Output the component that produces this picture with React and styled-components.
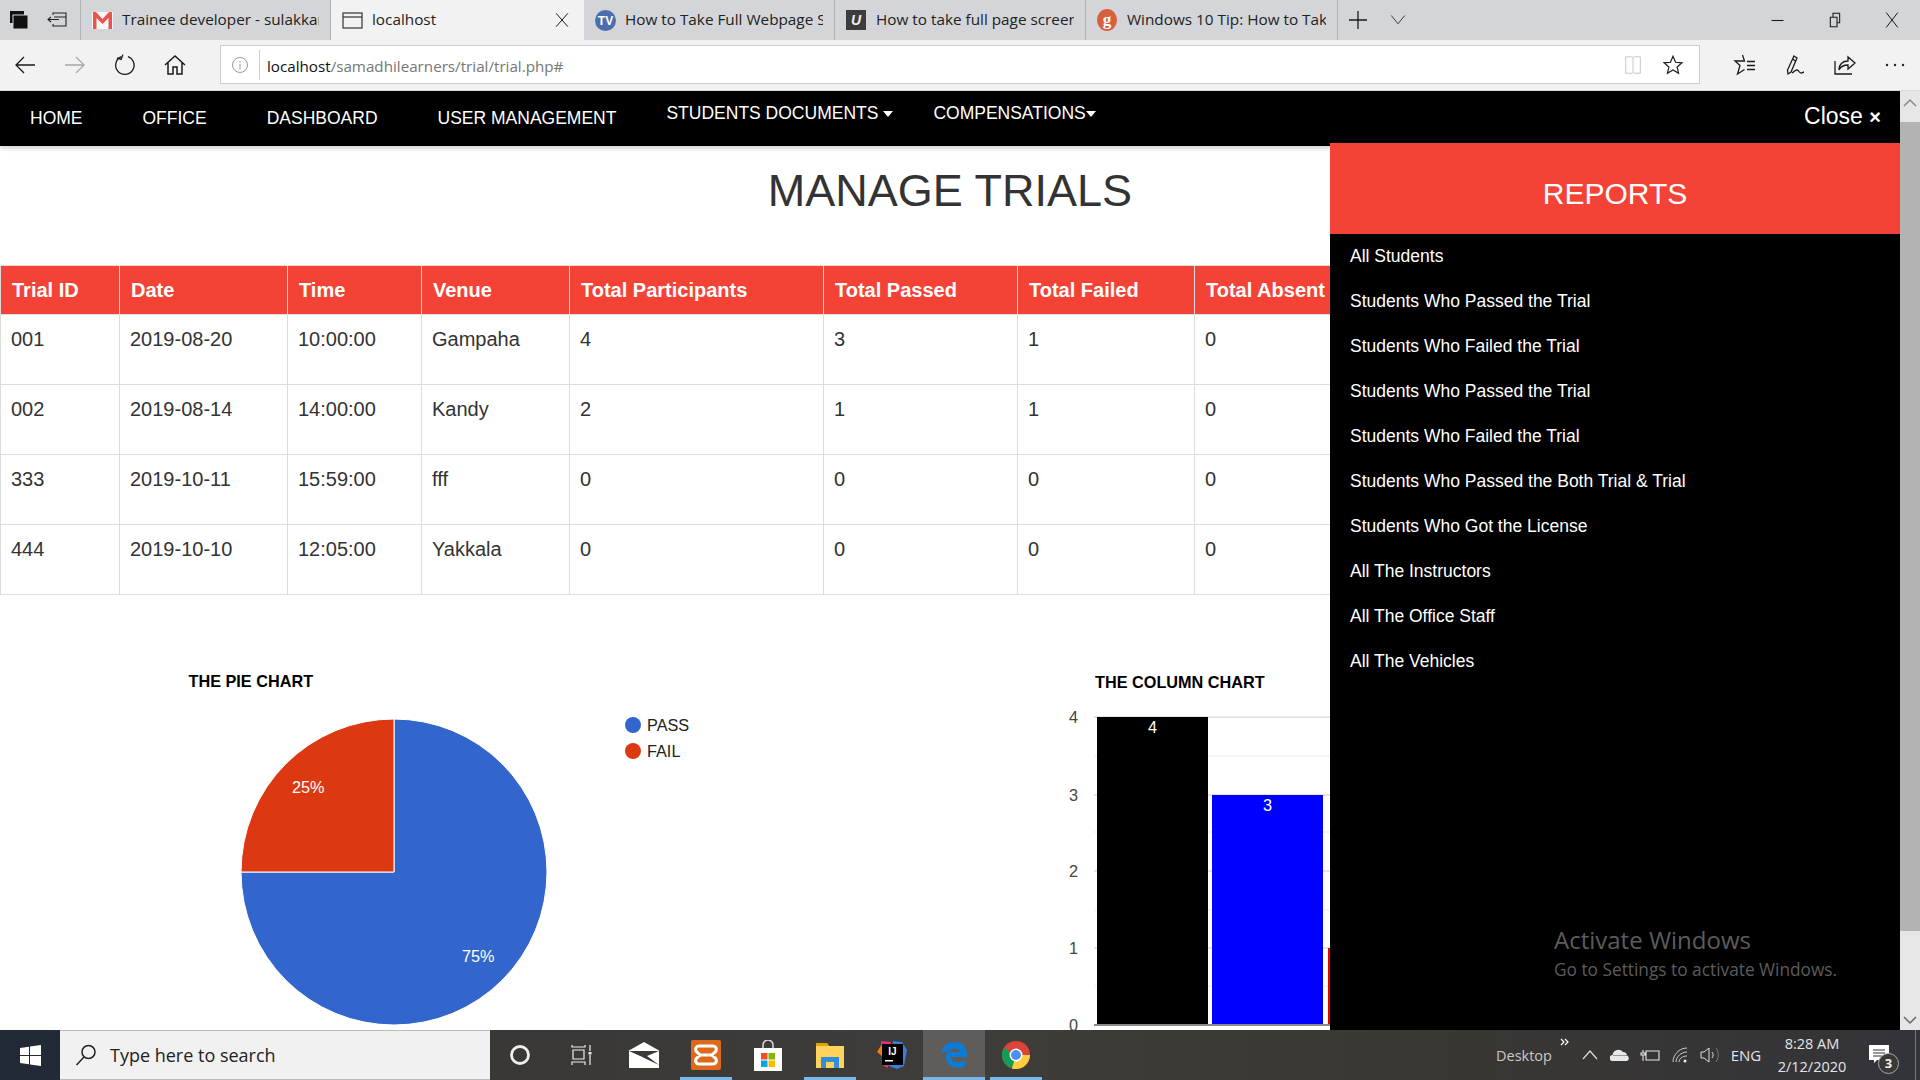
import React from 'react';
import styled, { createGlobalStyle } from 'styled-components';

const GlobalStyle = createGlobalStyle`
  html, body {
    margin: 0;
    height: 100%;
    overflow: hidden;
    background: #fff;
  }
  * {
    box-sizing: border-box;
  }
`;

const uiFont = `"Open Sans", "Noto Sans", sans-serif`;
const pageFont = `"Liberation Sans", Arial, sans-serif`;

const tabs = [
  { title: 'Trainee developer - sulakkani', width: 250, icon: 'gmail' },
  { title: 'localhost', width: 253, icon: 'page', active: true },
  { title: 'How to Take Full Webpage Screenshots', width: 251, icon: 'tv' },
  { title: 'How to take full page screenshot', width: 251, icon: 'u' },
  { title: 'Windows 10 Tip: How to Take', width: 252, icon: 'g' },
];

const columns = [
  { label: 'Trial ID', width: 119 },
  { label: 'Date', width: 168 },
  { label: 'Time', width: 134 },
  { label: 'Venue', width: 148 },
  { label: 'Total Participants', width: 254 },
  { label: 'Total Passed', width: 194 },
  { label: 'Total Failed', width: 177 },
  { label: 'Total Absent', width: 160 },
];

const trials = [
  ['001', '2019-08-20', '10:00:00', 'Gampaha', '4', '3', '1', '0'],
  ['002', '2019-08-14', '14:00:00', 'Kandy', '2', '1', '1', '0'],
  ['333', '2019-10-11', '15:59:00', 'fff', '0', '0', '0', '0'],
  ['444', '2019-10-10', '12:05:00', 'Yakkala', '0', '0', '0', '0'],
];

const reports = [
  'All Students',
  'Students Who Passed the Trial',
  'Students Who Failed the Trial',
  'Students Who Passed the Trial',
  'Students Who Failed the Trial',
  'Students Who Passed the Both Trial & Trial',
  'Students Who Got the License',
  'All The Instructors',
  'All The Office Staff',
  'All The Vehicles',
];

const Line = ({ children, size = 24, width = 1.3, color = '#1a1a1a' }) => (
  <svg width={size} height={size} viewBox="0 0 24 24" fill="none" stroke={color} strokeWidth={width}>
    {children}
  </svg>
);

const TabIcon = ({ name }) => {
  if (name === 'gmail') {
    return (
      <svg width="21" height="17" viewBox="0 0 21 17">
        <rect width="21" height="17" fill="#f7f7f7" />
        <path d="M1 0h3l6.500 7L17 0h3v17h-3.500V6L10.500 12 4.500 6v11H1z" fill="#e8554e" />
      </svg>
    );
  }
  if (name === 'page') {
    return (
      <svg width="21" height="17" viewBox="0 0 21 17" fill="none" stroke="#333" strokeWidth="1.2">
        <rect x="1" y="1" width="19" height="15" />
        <path d="M1 5h19" />
      </svg>
    );
  }
  if (name === 'tv') {
    return (
      <svg width="21" height="21" viewBox="0 0 21 21">
        <circle cx="10.500" cy="10.500" r="10.500" fill="#4a6eb0" />
        <text x="10.500" y="15" textAnchor="middle" fontSize="12" fontWeight="700" fill="#fff" fontFamily={pageFont}>
          TV
        </text>
      </svg>
    );
  }
  if (name === 'u') {
    return (
      <svg width="20" height="20" viewBox="0 0 20 20">
        <rect width="20" height="20" fill="#3c3c3c" />
        <text x="10" y="15" textAnchor="middle" fontSize="14" fontStyle="italic" fontWeight="700" fill="#eee" fontFamily={pageFont}>
          U
        </text>
      </svg>
    );
  }
  return (
    <svg width="20" height="22" viewBox="0 0 20 22">
      <ellipse cx="10" cy="11" rx="10" ry="11" fill="#d9603f" />
      <text x="10" y="16" textAnchor="middle" fontSize="17" fontWeight="700" fill="#fff" fontFamily='"Liberation Serif", serif'>
        g
      </text>
    </svg>
  );
};

const PieChart = () => (
  <PieSvg viewBox="0 595 1060 435">
    <text x="188.500" y="687" fontSize="16.250" fontWeight="700" fill="#000">THE PIE CHART</text>
    <path d="M394 872 L394 719 A153 153 0 1 1 241 872 Z" fill="#3366cc" stroke="#fff" />
    <path d="M394 872 L241 872 A153 153 0 0 1 394 719 Z" fill="#dc3912" stroke="#fff" />
    <text x="292" y="793" fontSize="16.250" fill="#fff">25%</text>
    <text x="462" y="962" fontSize="16.250" fill="#fff">75%</text>
    <circle cx="633" cy="725" r="8" fill="#3366cc" />
    <text x="647" y="731" fontSize="16.250" fill="#222">PASS</text>
    <circle cx="633" cy="751" r="8" fill="#dc3912" />
    <text x="647" y="757" fontSize="16.250" fill="#222">FAIL</text>
  </PieSvg>
);

const ColumnChart = () => (
  <ColumnSvg viewBox="1060 595 270 435">
    <text x="1095" y="688" fontSize="16.250" fontWeight="700" fill="#000">THE COLUMN CHART</text>
    {[756, 832, 910, 986].map(y => (
      <path key={y} d={`M1094 ${y}H1330`} stroke="#ebebeb" />
    ))}
    {[717, 795, 871, 948].map(y => (
      <path key={y} d={`M1094 ${y}H1330`} stroke="#ccc" />
    ))}
    {[['4', 717], ['3', 795], ['2', 871], ['1', 948], ['0', 1030]].map(([label, y]) => (
      <text key={label} x="1069" y={label === '0' ? y + 1 : y + 6} fontSize="16.250" fill="#444">{label}</text>
    ))}
    <rect x="1097" y="717" width="111" height="307" fill="#000" />
    <rect x="1212" y="795" width="111" height="229" fill="#00f" />
    <rect x="1328" y="948" width="2" height="76" fill="#e00" />
    <path d="M1094 1025H1330" stroke="#666" strokeWidth="1.500" />
    <text x="1152.500" y="733" textAnchor="middle" fontSize="16.250" fill="#fff">4</text>
    <text x="1267.500" y="811" textAnchor="middle" fontSize="16.250" fill="#fff">3</text>
  </ColumnSvg>
);

const App = () => {
  return (
    <Screen>
      <GlobalStyle />

      <TabStrip>
        <StripTools>
          <svg width="20" height="20" viewBox="0 0 20 20">
            <rect x="1" y="1" width="14" height="12" fill="#111" />
            <rect x="4" y="5" width="15" height="14" fill="#111" stroke="#d3d5d8" />
          </svg>
          <svg width="20" height="16" viewBox="0 0 20 16" fill="none" stroke="#222" strokeWidth="1.100">
            <path d="M6 3V1h13v13H6v-2M1 7.500h11M4 5L1 7.500 4 10M7 5h12" />
          </svg>
        </StripTools>
        {tabs.map(tab => (
          <Tab key={tab.icon} $width={tab.width} $active={tab.active}>
            <TabIconSlot>
              <TabIcon name={tab.icon} />
            </TabIconSlot>
            <TabTitle>{tab.title}</TabTitle>
            {tab.active && (
              <TabClose>
                <Line size={20} width={1.2}>
                  <path d="M5 4l14 16M19 4L5 20" />
                </Line>
              </TabClose>
            )}
          </Tab>
        ))}
        <StripButton>
          <Line size={24} width={1.3}>
            <path d="M12 3v18M3 12h18" />
          </Line>
        </StripButton>
        <StripButton>
          <Line size={18} width={1.1}>
            <path d="M3 6l9 11 9-11" />
          </Line>
        </StripButton>
        <WindowControls>
          <WindowButton>
            <Line size={13} width={2}>
              <path d="M1 12h22" />
            </Line>
          </WindowButton>
          <WindowButton>
            <Line size={16} width={1.6}>
              <path d="M5 8h10v14H5zM9 8V2h10v14h-4" />
            </Line>
          </WindowButton>
          <WindowButton>
            <Line size={20} width={1.2}>
              <path d="M5 3l14 18M19 3L5 21" />
            </Line>
          </WindowButton>
        </WindowControls>
      </TabStrip>

      <Toolbar>
        <ToolSlot>
          <Line>
            <path d="M22 12H3M11 4l-8 8 8 8" />
          </Line>
        </ToolSlot>
        <ToolSlot>
          <Line color="#a8a8a8">
            <path d="M2 12h19M13 4l8 8-8 8" />
          </Line>
        </ToolSlot>
        <ToolSlot>
          <Line>
            <path d="M15 3.600A9.200 9.200 0 1 1 8.500 3.700" />
            <path d="M9 1.500v5H4.500" transform="rotate(20 9 4)" />
          </Line>
        </ToolSlot>
        <ToolSlot>
          <Line width={1.5}>
            <path d="M2 12l10-9 10 9M5 10v11h5v-7h4v7h5V10" />
          </Line>
        </ToolSlot>
        <AddressBar>
          <InfoSlot>
            <Line size={18} width={1} color="#777">
              <circle cx="12" cy="12" r="10" />
              <path d="M12 10.500V18M12 6.500v2" />
            </Line>
          </InfoSlot>
          <UrlText>
            localhost<UrlPath>/samadhilearners/trial/trial.php#</UrlPath>
          </UrlText>
          <AddressIcons>
            <Line size={22} width={1} color="#c4c4c4">
              <path d="M4 3h7l1 1 1-1h7v18h-7l-1-1-1 1H4zM12 4v16" />
            </Line>
            <Line size={22} width={1.3}>
              <path d="M12 2.500l2.800 6.500 7 .6-5.300 4.600 1.600 6.900-6.100-3.600-6.100 3.600 1.600-6.900L2.200 9.600l7-.6z" />
            </Line>
          </AddressIcons>
        </AddressBar>
        <ToolSlots>
          <ToolSlot>
            <Line>
              <path d="M9.500 2l2 6H2l5 4.500L4.500 21l7-4.500M14 8.500h8M14 12.500h8M14 16.500h8" />
            </Line>
          </ToolSlot>
          <ToolSlot>
            <Line>
              <path d="M11 3l3 2-6 14-3 2-.5-4zM9.500 6l3 2M9 20c2-1 3-3 5-3s2 3 4 3 2-1 3-1" />
            </Line>
          </ToolSlot>
          <ToolSlot>
            <Line>
              <path d="M2 8v13h17M6 17c0-6 4-9 9-9V4l7 6-7 6v-4c-4 0-7 1-9 5z" />
            </Line>
          </ToolSlot>
          <ToolSlot>
            <svg width="20" height="6" viewBox="0 0 20 6" fill="#222">
              <circle cx="2" cy="3" r="1.200" />
              <circle cx="10" cy="3" r="1.200" />
              <circle cx="18" cy="3" r="1.200" />
            </svg>
          </ToolSlot>
        </ToolSlots>
      </Toolbar>

      <Middle>
        <Viewport>
          <Navbar>
            <NavLink>HOME</NavLink>
            <NavLink>OFFICE</NavLink>
            <NavLink>DASHBOARD</NavLink>
            <NavLink>USER MANAGEMENT</NavLink>
            <NavDropdown $gap={5}>STUDENTS DOCUMENTS</NavDropdown>
            <NavDropdown $gap={0}>COMPENSATIONS</NavDropdown>
            <CloseLink>
              Close <CloseMark>×</CloseMark>
            </CloseLink>
          </Navbar>

          <PageTitle>MANAGE TRIALS</PageTitle>

          <TrialTable>
            <colgroup>
              {columns.map(col => (
                <TableCol key={col.label} $width={col.width} />
              ))}
            </colgroup>
            <thead>
              <tr>
                {columns.map(col => (
                  <HeadCell key={col.label}>{col.label}</HeadCell>
                ))}
              </tr>
            </thead>
            <tbody>
              {trials.map(row => (
                <tr key={row[0]}>
                  {row.map((value, i) => (
                    <BodyCell key={i}>{value}</BodyCell>
                  ))}
                </tr>
              ))}
            </tbody>
          </TrialTable>

          <ChartRow>
            <PieChart />
            <ColumnChart />
          </ChartRow>

          <ReportPanel>
            <ReportHeader>REPORTS</ReportHeader>
            {reports.map((label, i) => (
              <ReportLink key={i}>{label}</ReportLink>
            ))}
            <Watermark>
              <WatermarkTitle>Activate Windows</WatermarkTitle>
              <WatermarkText>Go to Settings to activate Windows.</WatermarkText>
            </Watermark>
          </ReportPanel>
        </Viewport>

        <Scrollbar>
          <ScrollArrow>
            <svg width="14" height="10" viewBox="0 0 14 10" fill="none" stroke="#8a8a8a" strokeWidth="1.500">
              <path d="M1 8l6-6 6 6" />
            </svg>
          </ScrollArrow>
          <ScrollThumb />
          <ScrollRest>
            <svg width="14" height="10" viewBox="0 0 14 10" fill="none" stroke="#666" strokeWidth="1.500">
              <path d="M1 2l6 6 6-6" />
            </svg>
          </ScrollRest>
        </Scrollbar>
      </Middle>

      <Taskbar>
        <StartButton>
          <svg width="21" height="21" viewBox="0 0 21 21" fill="#fff">
            <path d="M0 3l9-1.300V10H0zM10 1.500L21 0v10H10zM0 11h9v8.300L0 18zM10 11h11v10l-11-1.500z" />
          </svg>
        </StartButton>
        <SearchBox>
          <svg width="24" height="24" viewBox="0 0 24 24" fill="none" stroke="#222" strokeWidth="1.500">
            <circle cx="14.500" cy="9" r="6.500" />
            <path d="M10 14l-7.500 8" />
          </svg>
          <SearchText>Type here to search</SearchText>
        </SearchBox>

        <TaskList>
          <TaskSlot>
            <svg width="22" height="22" viewBox="0 0 22 22" fill="none" stroke="#eee" strokeWidth="2.800">
              <circle cx="11" cy="11" r="8.500" />
            </svg>
          </TaskSlot>
          <TaskSlot>
            <svg width="22" height="22" viewBox="0 0 22 22" fill="none" stroke="#eee" strokeWidth="1.200">
              <path d="M1 1v2h13V1M2 6h11v9H2zM1 21v-3h13v3M19 1v6M19 11v10" />
              <rect x="17.500" y="8" width="3" height="2.500" fill="#eee" stroke="none" />
            </svg>
          </TaskSlot>
          <TaskSlot>
            <svg width="30" height="26" viewBox="0 0 30 26">
              <path d="M15 0l15 8.500V26H0V8.500z" fill="#fff" />
              <path d="M0 9l30 0-12 5 12 9-17-8z" fill="#3a3835" />
              <path d="M0 26V9.500l13 5.500 17 9V26z" fill="#fff" />
            </svg>
          </TaskSlot>
          <TaskSlot $running>
            <svg width="30" height="30" viewBox="0 0 30 30">
              <rect width="30" height="30" rx="2" fill="#dd6a1c" />
              <path d="M8 6h14c3 0 4 3 3 5l-4 4 4 4c1 2 0 5-3 5H8c-3 0-4-3-3-5l4-4-4-4c-1-2 0-5 3-5z" fill="none" stroke="#fff" strokeWidth="3" />
              <path d="M9 15h12" stroke="#fff" strokeWidth="3" />
            </svg>
          </TaskSlot>
          <TaskSlot>
            <svg width="30" height="31" viewBox="0 0 30 31">
              <path d="M10 8V5a5 5 0 0 1 10 0v3" fill="none" stroke="#ddd" strokeWidth="1.500" />
              <path d="M1 8h28v23H1z" fill="#fff" />
              <rect x="8" y="13" width="6.500" height="6.500" fill="#f25022" />
              <rect x="15.500" y="13" width="6.500" height="6.500" fill="#7fba00" />
              <rect x="8" y="20.500" width="6.500" height="6.500" fill="#00a4ef" />
              <rect x="15.500" y="20.500" width="6.500" height="6.500" fill="#ffb900" />
            </svg>
          </TaskSlot>
          <TaskSlot $running>
            <svg width="28" height="26" viewBox="0 0 28 26">
              <path d="M0 1h11l2 3h15v22H0z" fill="#ffd35c" />
              <path d="M0 1h11l2 3H0z" fill="#e3a008" />
              <path d="M5 26v-11h18v11h-5v-6h-8v6z" fill="#2f8fd8" />
            </svg>
          </TaskSlot>
          <TaskSlot>
            <svg width="30" height="30" viewBox="0 0 30 30">
              <path d="M4 1l10 1-3 26-6-3z" fill="#ee2d72" />
              <path d="M0 12l5-8 5 16z" fill="#f97a12" />
              <path d="M16 1l9 1 5 8-3 16-7 3-8-3z" fill="#3a7de0" />
              <rect x="5" y="4" width="21" height="21" fill="#000" />
              <text x="15.500" y="15" textAnchor="middle" fontSize="10" fontWeight="700" fill="#fff" fontFamily={pageFont}>IJ</text>
              <rect x="8" y="20" width="8" height="1.500" fill="#fff" />
            </svg>
          </TaskSlot>
          <TaskSlot $running $active>
            <svg width="28" height="28" viewBox="0 0 28 28">
              <path d="M1 12C3 4 9 1 15 1c7 0 12 5 12 13v2H10c1 5 9 7 15 3v6c-8 4-18 1-19-8-.5-3 1-6 3-8-4 1-6 3-8 3zM10 11h10c0-5-9-5-10 0z" fill="#0b7cd8" />
            </svg>
          </TaskSlot>
          <TaskSlot $running>
            <svg width="28" height="28" viewBox="0 0 28 28">
              <circle cx="14" cy="14" r="14" fill="#db4437" />
              <path d="M14 14L1.900 7a14 14 0 0 0 8 20.400z" fill="#0f9d58" />
              <path d="M14 14h14a14 14 0 0 1-18.100 13.400z" fill="#ffcd40" />
              <circle cx="14" cy="14" r="6.500" fill="#fff" />
              <circle cx="14" cy="14" r="5" fill="#4d90f0" />
            </svg>
          </TaskSlot>
        </TaskList>

        <Tray>
          <DesktopLabel>Desktop</DesktopLabel>
          <DoubleChevron>
            <svg width="10" height="8" viewBox="0 0 10 8" fill="none" stroke="#fff" strokeWidth="1.200">
              <path d="M1 1l3 3-3 3M5 1l3 3-3 3" />
            </svg>
          </DoubleChevron>
          <TraySlot>
            <svg width="16" height="10" viewBox="0 0 16 10" fill="none" stroke="#ddd" strokeWidth="1.200">
              <path d="M1 9l7-8 7 8" />
            </svg>
          </TraySlot>
          <TraySlot>
            <svg width="20" height="14" viewBox="0 0 20 14">
              <path d="M3 13a3 3 0 0 1-.500-6A6 6 0 0 1 13 4a4 4 0 0 1 4 3.500A3 3 0 0 1 17 13z" fill="#e8e8e8" />
              <path d="M3 7h14v1H3z" fill="#999" />
            </svg>
          </TraySlot>
          <TraySlot>
            <svg width="20" height="14" viewBox="0 0 20 14" fill="none" stroke="#e8e8e8" strokeWidth="1.100">
              <path d="M6 3h13v9H6zM3 2v3M1 5h4v2H1zM3 7v6" />
            </svg>
          </TraySlot>
          <TraySlot>
            <svg width="16" height="16" viewBox="0 0 16 16" fill="none" stroke="#ccc" strokeWidth="1">
              <path d="M1 15C1 8 7 1 15 1M4 15c0-5 5-10 11-10M7 15c0-3 3-6 8-6" />
              <circle cx="13" cy="14" r="1.500" fill="#eee" stroke="none" />
            </svg>
          </TraySlot>
          <TraySlot>
            <svg width="20" height="16" viewBox="0 0 20 16" fill="none" stroke="#ddd" strokeWidth="1">
              <path d="M1 5h3l5-4v14l-5-4H1zM12 5c1.500 2 1.500 4 0 6" />
              <path d="M16 1c3 4 3 10 0 14" stroke="#777" />
            </svg>
          </TraySlot>
          <LangLabel>ENG</LangLabel>
          <Clock>
            <span>8:28 AM</span>
            <span>2/12/2020</span>
          </Clock>
          <NotifySlot>
            <svg width="21" height="18" viewBox="0 0 21 18">
              <path d="M0 0h20v15H8l-3 3v-3H0z" fill="#fff" />
              <path d="M4 5h12M4 8h12M4 11h9" stroke="#333" />
            </svg>
            <NotifyBadge>3</NotifyBadge>
          </NotifySlot>
          <ShowDesktop />
        </Tray>
      </Taskbar>
    </Screen>
  );
};

export default App;

const Screen = styled.div`
  display: flex;
  flex-direction: column;
  width: 1920px;
  height: 1080px;
  overflow: hidden;
  font-family: ${uiFont};
`;

const TabStrip = styled.div`
  display: flex;
  flex: none;
  height: 40px;
  background-color: #d3d5d8;
`;

const StripTools = styled.div`
  display: flex;
  align-items: center;
  justify-content: space-between;
  width: 81px;
  padding: 0 13px 0 9px;
  border-right: 1px solid #b0b2b5;
`;

const Tab = styled.div`
  display: flex;
  align-items: center;
  flex: none;
  width: ${({ $width }) => $width}px;
  padding: 0 0 0 10px;
  font-size: 15.3px;
  color: #222;
  background-color: ${({ $active }) => ($active ? '#f2f2f2' : 'transparent')};
  border-right: ${({ $active }) => ($active ? 'none' : '1px solid #b0b2b5')};
`;

const TabIconSlot = styled.div`
  display: flex;
  justify-content: center;
  flex: none;
  width: 22px;
  margin-right: 9px;
`;

const TabTitle = styled.div`
  flex: 1;
  min-width: 0;
  margin-right: 11px;
  padding-bottom: 2px;
  overflow: hidden;
  white-space: nowrap;
`;

const TabClose = styled.div`
  display: flex;
  flex: none;
  margin-right: 12px;
`;

const StripButton = styled.div`
  display: flex;
  align-items: center;
  justify-content: center;
  width: 40px;
`;

const WindowControls = styled.div`
  display: flex;
  margin-left: auto;
`;

const WindowButton = styled.div`
  display: flex;
  align-items: center;
  justify-content: center;
  width: 57px;
`;

const Toolbar = styled.div`
  display: flex;
  align-items: center;
  flex: none;
  height: 51px;
  padding-bottom: 1px;
  background-color: #f2f2f2;
  border-bottom: 1px solid #d9d9d9;
`;

const ToolSlot = styled.div`
  display: flex;
  align-items: center;
  justify-content: center;
  width: 50px;
`;

const ToolSlots = styled.div`
  display: flex;
  margin-left: 20px;
`;

const AddressBar = styled.div`
  display: flex;
  align-items: center;
  width: 1480px;
  height: 39px;
  margin-left: 20px;
  background-color: #fff;
  border: 1px solid #ccc;
`;

const InfoSlot = styled.div`
  display: flex;
  align-items: center;
  justify-content: center;
  width: 39px;
  height: 30px;
  border-right: 1px solid #ccc;
`;

const UrlText = styled.div`
  padding: 2px 0 0 7px;
  font-size: 15.2px;
  color: #111;
`;

const UrlPath = styled.span`
  color: #767676;
`;

const AddressIcons = styled.div`
  display: flex;
  align-items: center;
  gap: 18px;
  margin-left: auto;
  padding-right: 15px;
`;

const Middle = styled.div`
  display: flex;
  flex: 1;
  min-height: 0;
`;

const Viewport = styled.main`
  position: relative;
  flex: 1;
  min-width: 0;
  overflow: hidden;
  background-color: #fff;
  font-family: ${pageFont};
`;

const Navbar = styled.nav`
  display: flex;
  align-items: center;
  height: 55px;
  background-color: #000;
  box-shadow: 0 2px 5px rgba(0, 0, 0, 0.2);
`;

const NavLink = styled.a`
  padding: 0 30px;
  font-size: 17.5px;
  color: #fff;
`;

const NavDropdown = styled.a`
  display: flex;
  align-items: center;
  gap: ${({ $gap }) => $gap}px;
  padding: 0 20px 10px;
  font-size: 17.5px;
  color: #fff;

  &::after {
    content: '';
    border-top: 6px solid #fff;
    border-left: 5.5px solid transparent;
    border-right: 5.5px solid transparent;
  }
`;

const CloseLink = styled.a`
  margin-left: auto;
  padding: 0 19px 4px 0;
  font-size: 23px;
  color: #fff;
`;

const CloseMark = styled.span`
  font-size: 20px;
  font-weight: 700;
`;

const PageTitle = styled.h1`
  margin: 0;
  padding: 18px 0 47px;
  font-size: 45px;
  font-weight: 400;
  line-height: 54px;
  text-align: center;
  color: #333;
`;

const TrialTable = styled.table`
  width: 1354px;
  table-layout: fixed;
  border-collapse: collapse;
  font-size: 20px;
  line-height: 30px;
  color: #333;
`;

const TableCol = styled.col`
  width: ${({ $width }) => $width}px;
`;

const HeadCell = styled.th`
  height: 49px;
  padding: 8px 11px;
  background-color: #f44336;
  border: 1px solid #ddd;
  font-weight: 700;
  text-align: left;
  color: #fff;
  white-space: nowrap;
`;

const BodyCell = styled.td`
  height: 70px;
  padding: 9px 10px;
  border: 1px solid #ddd;
  vertical-align: top;
`;

const ChartRow = styled.div`
  display: flex;
`;

const PieSvg = styled.svg`
  flex: none;
  width: 1060px;
  height: 435px;
`;

const ColumnSvg = styled.svg`
  flex: none;
  width: 270px;
  height: 435px;
`;

const ReportPanel = styled.aside`
  position: absolute;
  top: 52px;
  right: 0;
  bottom: 0;
  width: 570px;
  background-color: #000;
`;

const ReportHeader = styled.h2`
  margin: 0;
  height: 91px;
  background-color: #f44336;
  font-size: 30px;
  font-weight: 400;
  line-height: 102px;
  text-align: center;
  color: #fff;
`;

const ReportLink = styled.a`
  display: block;
  height: 45px;
  padding-left: 20px;
  font-size: 17.5px;
  line-height: 45px;
  color: #fff;
`;

const Watermark = styled.div`
  position: absolute;
  left: 224px;
  top: 780px;
  font-family: ${uiFont};
  color: #5c5c5c;
`;

const WatermarkTitle = styled.div`
  font-size: 24px;
  line-height: 34px;
`;

const WatermarkText = styled.div`
  font-size: 17.3px;
  line-height: 26px;
`;

const Scrollbar = styled.div`
  display: flex;
  flex-direction: column;
  flex: none;
  width: 20px;
  background-color: #e6e6e6;
`;

const ScrollArrow = styled.div`
  display: flex;
  justify-content: center;
  flex: none;
  height: 31px;
  padding-top: 7px;
`;

const ScrollThumb = styled.div`
  flex: none;
  height: 809px;
  background-color: #b3b3b3;
`;

const ScrollRest = styled.div`
  display: flex;
  align-items: flex-end;
  justify-content: center;
  flex: 1;
  padding-bottom: 5px;
`;

const Taskbar = styled.footer`
  display: flex;
  flex: none;
  height: 50px;
  background: linear-gradient(90deg, #33302f 0%, #3b3936 30%, #3f3d39 50%, #3a3732 75%, #33343a 100%);
`;

const StartButton = styled.div`
  display: flex;
  align-items: center;
  justify-content: center;
  flex: none;
  width: 60px;
  background-color: #212a35;
`;

const SearchBox = styled.div`
  display: flex;
  align-items: center;
  flex: none;
  width: 430px;
  padding-left: 14px;
  background-color: #f1f1f1;
  border-top: 1px solid #bbb;
  border-bottom: 1px solid #bbb;
`;

const SearchText = styled.span`
  margin-left: 12px;
  font-size: 18px;
  color: #222;
`;

const TaskList = styled.div`
  display: flex;
  flex: none;
  margin-left: -1px;
`;

const TaskSlot = styled.div`
  display: flex;
  align-items: center;
  justify-content: center;
  flex: none;
  position: relative;
  width: 62px;
  background-color: ${({ $active }) => ($active ? '#5f5c59' : 'transparent')};

  &::after {
    content: '';
    display: ${({ $running }) => ($running ? 'block' : 'none')};
    position: absolute;
    left: ${({ $active }) => ($active ? 0 : 5)}px;
    right: ${({ $active }) => ($active ? 0 : 5)}px;
    bottom: 0;
    height: 3px;
    background-color: #76b9ed;
  }
`;

const Tray = styled.div`
  display: flex;
  align-items: center;
  flex: none;
  width: 424px;
  margin-left: auto;
  color: #e4e4e4;
`;

const DesktopLabel = styled.span`
  flex: none;
  width: 64px;
  font-size: 14.5px;
  color: #c8c8c8;
`;

const DoubleChevron = styled.span`
  display: flex;
  align-self: flex-start;
  flex: none;
  width: 15px;
  padding-top: 8px;
`;

const TraySlot = styled.span`
  display: flex;
  align-items: center;
  justify-content: center;
  flex: none;
  width: 30px;
`;

const LangLabel = styled.span`
  flex: none;
  width: 42px;
  font-size: 15px;
  text-align: center;
`;

const Clock = styled.div`
  display: flex;
  flex-direction: column;
  align-items: center;
  flex: none;
  width: 90px;
  font-size: 14.5px;
  line-height: 23px;
`;

const NotifySlot = styled.div`
  position: relative;
  flex: none;
  width: 58px;
  height: 30px;
  padding: 5px 0 0 12px;
`;

const NotifyBadge = styled.span`
  position: absolute;
  top: 13px;
  left: 21px;
  width: 21px;
  height: 21px;
  border: 1px solid #aaa;
  border-radius: 50%;
  background-color: #3a3835;
  font-size: 13px;
  font-weight: 700;
  line-height: 19px;
  text-align: center;
  color: #eee;
`;

const ShowDesktop = styled.span`
  flex: none;
  width: 5px;
  height: 50px;
  border-left: 1px solid #777;
`;
